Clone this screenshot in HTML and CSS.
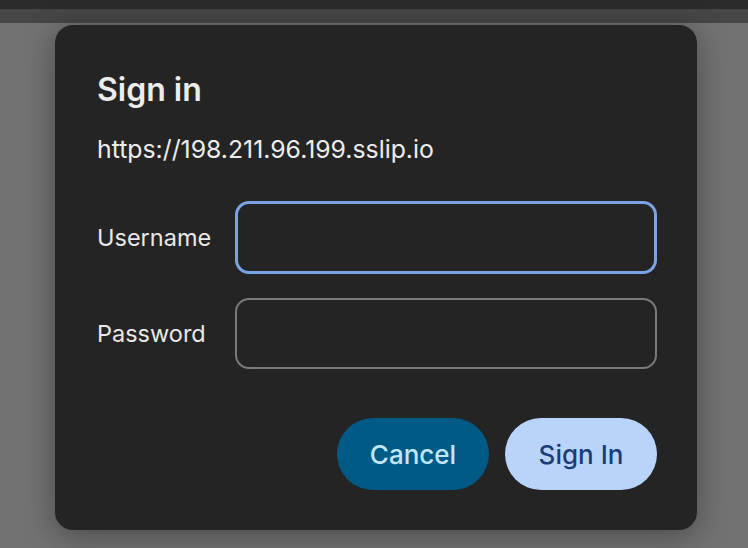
FILE: index.html
```html
<!DOCTYPE html>
<html lang="en">
<head>
    <meta charset="UTF-8">
    <meta name="viewport" content="width=device-width, initial-scale=1.0">
    <title>Sign in</title>
    <link rel="stylesheet" href="styles.css">
</head>
<body>
    <div class="toolbar"></div>
    <div class="toolbar-edge"></div>

    <div class="page">
        <form class="dialog" onsubmit="return false;">
            <h1 class="dialog-title">Sign in</h1>
            <p class="dialog-origin">https://198.211.96.199.sslip.io</p>

            <div class="field-row">
                <label for="username">Username</label>
                <input type="text" id="username" class="field focused">
            </div>
            <div class="field-row">
                <label for="password">Password</label>
                <input type="password" id="password" class="field">
            </div>

            <div class="button-container">
                <button type="button" class="btn btn-cancel">Cancel</button>
                <button type="submit" class="btn btn-signin">Sign In</button>
            </div>
        </form>
    </div>
</body>
</html>
```

FILE: styles.css
```css
body {
    font-family: Inter, "Liberation Sans", Arial, sans-serif;
    margin: 0;
    background-color: #727272;
    height: 548px;
    overflow: hidden;
}

.toolbar {
    height: 9px;
    background-color: #2b2b2b;
}

.toolbar-edge {
    height: 14px;
    background-color: #464646;
}

.page {
    padding: 2px 51px 0 55px;
}

.dialog {
    width: 642px;
    height: 505px;
    box-sizing: border-box;
    padding: 0 40px 0 42px;
    background-color: #242424;
    border-radius: 18px;
    box-shadow: 0 6px 30px rgba(0, 0, 0, 0.35);
    color: #ececec;
    display: flex;
    flex-direction: column;
}

.dialog-title {
    font-size: 32px;
    font-weight: 600;
    margin: 45px 0 0;
    line-height: 40px;
}

.dialog-origin {
    font-size: 24.8px;
    margin: 26px 0 0;
    line-height: 26px;
}

.field-row {
    display: flex;
    align-items: center;
}

.field-row:first-of-type {
    margin-top: 39px;
}

.field-row + .field-row {
    margin-top: 24px;
}

.field-row label {
    width: 138px;
    font-size: 23.5px;
    color: #e8e8e8;
}

.field {
    flex: 1;
    height: 71px;
    box-sizing: border-box;
    background-color: #242424;
    border: 2px solid #7a7a7a;
    border-radius: 14px;
    outline: none;
    color: #fff;
    font-size: 20px;
    padding: 0 16px;
}

.field.focused {
    height: 73px;
    border: 3px solid #7aa3e6;
}

.button-container {
    display: flex;
    justify-content: flex-end;
    gap: 16px;
    margin-top: 49px;
}

.btn {
    width: 152px;
    height: 72px;
    border: none;
    border-radius: 36px;
    font-family: inherit;
    font-size: 26px;
    font-weight: 500;
    cursor: pointer;
}

.btn-cancel {
    background-color: #005a86;
    color: #c2e6f8;
}

.btn-signin {
    background-color: #b8d4fb;
    color: #1a3d75;
}
```
